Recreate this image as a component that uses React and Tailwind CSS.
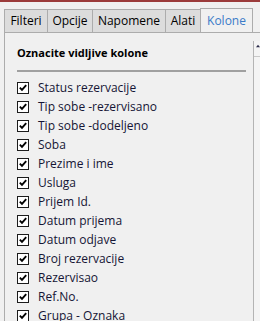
import React from "react";

const tabs = [
  { label: "Filteri", w: "w-[43px]" },
  { label: "Opcije", w: "w-[45px]" },
  { label: "Napomene", w: "w-[73px]" },
  { label: "Alati", w: "w-[35px]" },
];

const columns = [
  "Status rezervacije",
  "Tip sobe -rezervisano",
  "Tip sobe -dodeljeno",
  "Soba",
  "Prezime i ime",
  "Usluga",
  "Prijem Id.",
  "Datum prijema",
  "Datum odjave",
  "Broj rezervacije",
  "Rezervisao",
  "Ref.No.",
  "Grupa - Oznaka",
];

function Check() {
  return (
    <span className="flex h-[12px] w-[12px] shrink-0 items-center justify-center border border-[#1c1c1c] bg-white">
      <svg width="8" height="8" viewBox="0 0 8 8">
        <path d="M0.8 3.6 L3 5.8 L7.2 1.2" fill="none" stroke="#000" strokeWidth="1.9" />
      </svg>
    </span>
  );
}

export default function App() {
  return (
    <div className="h-[321px] w-[260px] overflow-hidden bg-[#f0f0f0] font-['Open_Sans',sans-serif] text-[12px]">
      <div className="h-[2px] bg-[#9b3b3b]" />
      <div className="flex items-end pl-[4px] pt-[6px]">
        {tabs.map((t) => (
          <div
            key={t.label}
            className={`${t.w} flex h-[23px] items-center justify-center border border-b-0 border-r-0 border-[#acacac] bg-[#dcdcdc] text-black`}
          >
            {t.label}
          </div>
        ))}
        <div className="flex h-[24px] w-[53px] items-center justify-center border border-b-0 border-[#acacac] bg-[#f0f0f0] text-[#3a7bc8]">
          Kolone
        </div>
      </div>
      <div className="ml-[4px] flex h-full border-l border-t border-[#acacac]">
        <div className="flex-1 pl-[12px] pr-[7px] pt-[12px]">
          <div className="text-[11px] font-bold leading-[16px] text-black">
            Oznacite vidljive kolone
          </div>
          <div className="mt-[9px] h-[2px] bg-[#a0a0a0]" />
          <div className="mt-[6px] flex flex-col">
            {columns.map((c) => (
              <div key={c} className="flex h-[19px] items-center gap-[9px]">
                <Check />
                <span className="leading-none text-[#151535]">{c}</span>
              </div>
            ))}
          </div>
        </div>
        <div className="mt-[8px] w-[7px] border-l border-[#b4b4b4] bg-[#f4f4f4]">
          <div className="flex h-[16px] items-start justify-center border-b border-[#c8c8c8] pl-[2px] pt-[3px]">
            <svg width="7" height="4" viewBox="0 0 7 4">
              <path d="M0 4 L3.5 0 L7 4 Z" fill="#2a2a4a" />
            </svg>
          </div>
        </div>
      </div>
    </div>
  );
}
